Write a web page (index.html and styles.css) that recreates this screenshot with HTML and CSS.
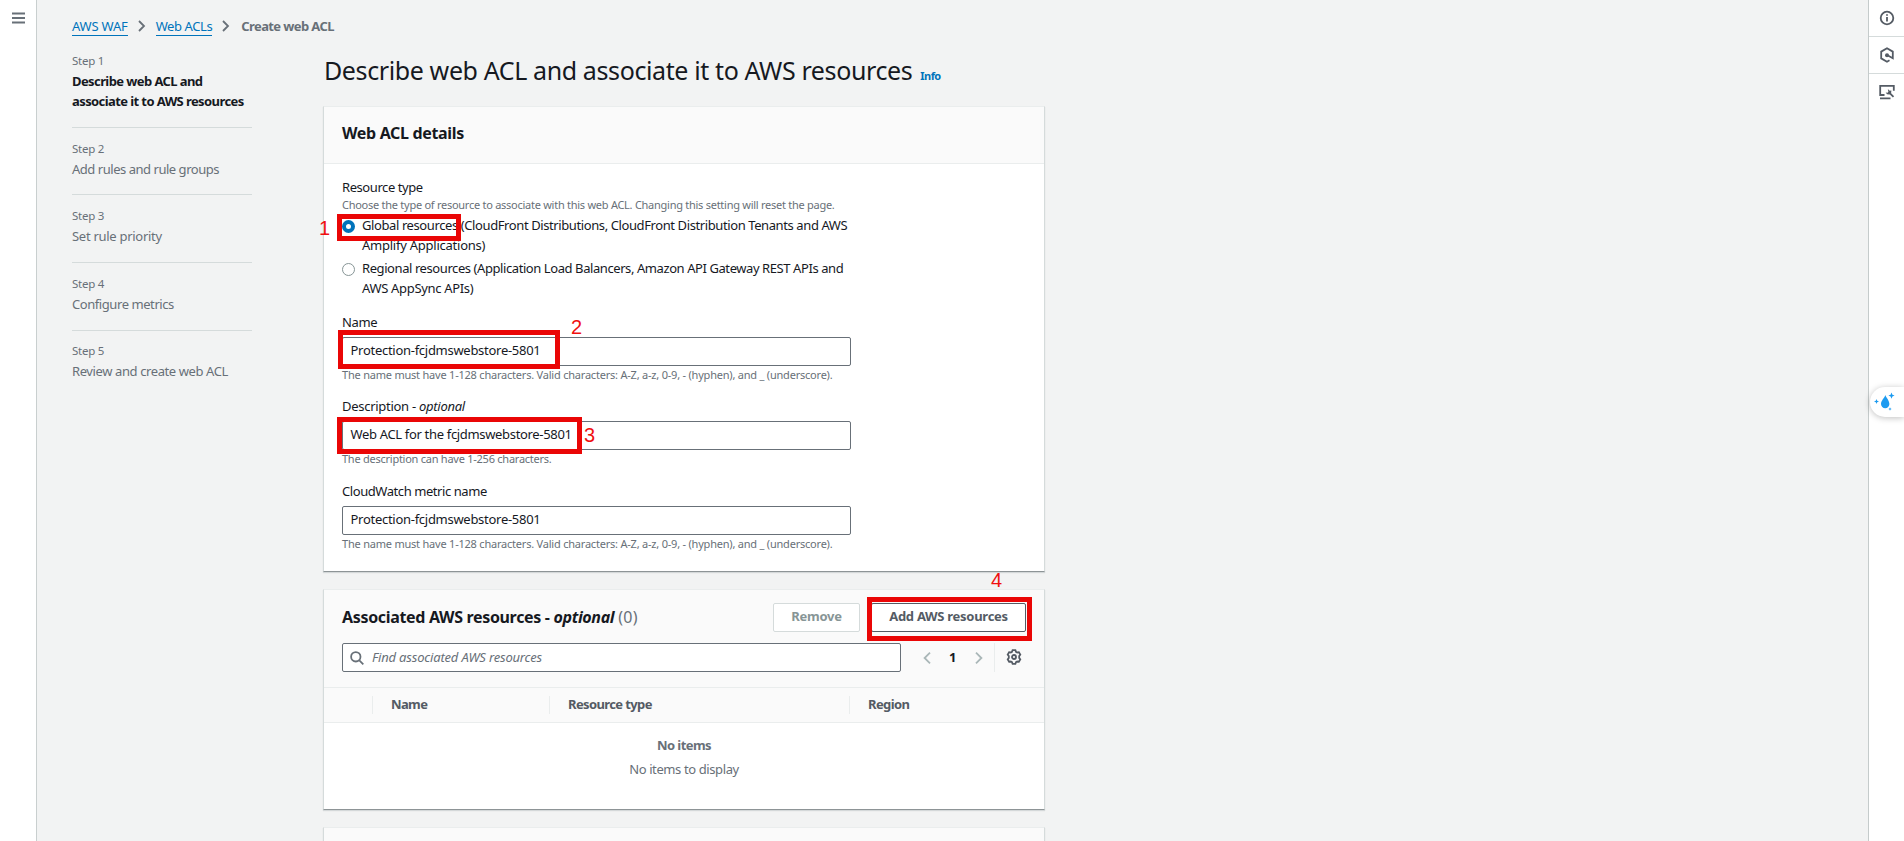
FILE: index.html
```
<!DOCTYPE html>
<html lang="en">
<head>
<meta charset="utf-8">
<title>Create web ACL</title>
<link rel="stylesheet" href="styles.css">
</head>
<body>
<div class="app">
  <aside class="rail rail-left">
    <svg class="menu-icon" width="14" height="14" viewBox="0 0 14 14"><path d="M0 2.500h13M0 7h13M0 11.500h13"/></svg>
  </aside>
  <main class="main">
    <nav class="breadcrumbs">
      <a class="crumb ls-20">AWS WAF</a>
      <svg class="sep" width="8" height="12" viewBox="0 0 8 12"><path d="M1 1l5 5-5 5"/></svg>
      <a class="crumb">Web ACLs</a>
      <svg class="sep" width="8" height="12" viewBox="0 0 8 12"><path d="M1 1l5 5-5 5"/></svg>
      <span class="crumb-current">Create web ACL</span>
    </nav>
    <div class="layout">
      <ol class="steps">
        <li class="step active"><span class="step-no">Step 1</span><span class="step-name">Describe web ACL and<br>associate it to AWS resources</span></li>
        <li class="step"><span class="step-no">Step 2</span><span class="step-name ls-47">Add rules and rule groups</span></li>
        <li class="step"><span class="step-no">Step 3</span><span class="step-name ls-28">Set rule priority</span></li>
        <li class="step"><span class="step-no">Step 4</span><span class="step-name ls-43">Configure metrics</span></li>
        <li class="step"><span class="step-no">Step 5</span><span class="step-name">Review and create web ACL</span></li>
      </ol>
      <div class="content">
        <div class="page-head"><h1>Describe web ACL and associate it to AWS resources</h1><a class="info">Info</a></div>

        <section class="card details">
          <header class="card-head"><h2>Web ACL details</h2></header>
          <div class="card-body">
            <div class="label ls-43">Resource type</div>
            <div class="hint ls-26">Choose the type of resource to associate with this web ACL. Changing this setting will reset the page.</div>
            <div class="option first">
              <span class="radio on"></span>
              <div class="option-text"><span class="ls-40">Global resources (CloudFront Distributions, CloudFront Distribution Tenants and AWS</span><br><span class="ls-24">Amplify Applications)</span></div>
            </div>
            <div class="option">
              <span class="radio"></span>
              <div class="option-text"><span class="ls-42">Regional resources (Application Load Balancers, Amazon API Gateway REST APIs and</span><br><span class="ls-33">AWS AppSync APIs)</span></div>
            </div>
            <div class="fields">
              <div class="field">
                <div class="label">Name</div>
                <div class="input ls-28">Protection-fcjdmswebstore-5801</div>
                <div class="hint">The name must have 1-128 characters. Valid characters: A-Z, a-z, 0-9, - (hyphen), and _ (underscore).</div>
              </div>
              <div class="field">
                <div class="label ls-28">Description - <i>optional</i></div>
                <div class="input ls-33">Web ACL for the fcjdmswebstore-5801</div>
                <div class="hint ls-25">The description can have 1-256 characters.</div>
              </div>
              <div class="field">
                <div class="label ls-43">CloudWatch metric name</div>
                <div class="input ls-28">Protection-fcjdmswebstore-5801</div>
                <div class="hint">The name must have 1-128 characters. Valid characters: A-Z, a-z, 0-9, - (hyphen), and _ (underscore).</div>
              </div>
            </div>
          </div>
        </section>

        <section class="card resources">
          <div class="res-head">
            <div class="res-title"><h2>Associated AWS resources - <i>optional</i></h2><span class="count">(0)</span></div>
            <div class="actions">
              <button class="btn disabled">Remove</button>
              <button class="btn add">Add AWS resources</button>
            </div>
          </div>
          <div class="tools">
            <div class="search">
              <svg width="14" height="14" viewBox="0 0 14 14"><circle cx="5.800" cy="5.800" r="4.700"/><path d="M9.300 9.300l4 4"/></svg>
              <span class="placeholder">Find associated AWS resources</span>
            </div>
            <div class="pager">
              <svg class="chev" width="8" height="12" viewBox="0 0 8 12"><path d="M7 0.700L1.600 6 7 11.300"/></svg>
              <b>1</b>
              <svg class="chev" width="8" height="12" viewBox="0 0 8 12"><path d="M1 0.700L6.400 6 1 11.300"/></svg>
            </div>
            <div class="prefs">
              <svg width="16" height="16" viewBox="0 0 16 16"><path d="M6 2.800L6.600 1.200h2.800l.6 1.600 1.200.7 1.700-.3 1.400 2.400L13.200 7v2l1.100 1.400-1.400 2.400-1.700-.3-1.200.7-.6 1.600H6.600L6 13.200l-1.200-.7-1.700.3-1.400-2.400L2.800 9V7L1.700 5.600l1.400-2.400 1.700.3z"/><circle cx="8" cy="8" r="2"/></svg>
            </div>
          </div>
          <div class="thead">
            <div class="th th-check"></div>
            <div class="th th-name">Name</div>
            <div class="th th-type">Resource type</div>
            <div class="th th-region">Region</div>
          </div>
          <div class="empty"><b>No items</b><span>No items to display</span></div>
        </section>

        <section class="card next"></section>
      </div>
    </div>
  </main>
  <aside class="rail rail-right">
    <div class="tool"><svg width="16" height="16" viewBox="0 0 16 16"><circle cx="8" cy="8" r="6.300"/><path d="M8 7v4.500M8 4.200v1.600"/></svg></div>
    <div class="tool"><svg width="16" height="16" viewBox="0 0 16 16"><path d="M10.500 13.300L8 14.700l-5.800-3.300V4.600L8 1.300l5.800 3.300v6.600L8.500 8.300"/><circle cx="8" cy="8.200" r="2" class="fill"/></svg></div>
    <div class="tool"><svg width="16" height="16" viewBox="0 0 16 16"><path d="M5.500 11H1.200V1.800h13.600v5M1 14.300h10.500M10.500 8.800l4 4"/><path class="fill" d="M8.800 5l1.900 1.700 1.700-.2-.3 2.800-1.700 1.200-2.400-.3-1.300-1.600 1.900.2.800-1z"/></svg></div>
  </aside>
</div>

<div class="assistant">
  <svg width="24" height="20" viewBox="0 0 24 20"><path d="M12.300 3c.8 2.600 4.100 5.400 4.100 9a4.200 4.200 0 0 1-8.400 0c0-3.600 3.500-5.900 4.300-9z"/><path d="M18.500.5l.9 2.200 2.200.9-2.200.9-.9 2.200-.9-2.200-2.200-.9 2.200-.9zM3.500 7l.7 1.800 1.800.7-1.800.7-.7 1.800-.7-1.800L1 9.500l1.800-.7zM17 15.300l.5 1.200 1.200.5-1.200.5-.5 1.200-.5-1.200-1.200-.5 1.200-.5z"/></svg>
</div>

<div class="mark m1"></div><span class="num n1">1</span>
<div class="mark m2"></div><span class="num n2">2</span>
<div class="mark m3"></div><span class="num n3">3</span>
<div class="mark m4"></div><span class="num n4">4</span>
</body>
</html>
```
FILE: styles.css
```
* { box-sizing: border-box; }
body {
  margin: 0;
  height: 841px;
  overflow: hidden;
  background: #f2f3f3;
  color: #16191f;
  font: 13px/20px "Noto Sans", sans-serif;
  letter-spacing: -.395px;
}
h1, h2 { margin: 0; }
b { letter-spacing: -.57px; }
svg { display: block; fill: none; stroke: #545b64; stroke-width: 1.8; flex: none; }
.fill { fill: #545b64; stroke: none; }

.app { display: flex; height: 841px; overflow: hidden; }
.rail { background: #fff; flex: none; }
.rail-left { width: 37px; border-right: 1px solid #c9cfcf; padding: 11px 0 0 12px; }
.rail-right { width: 36px; border-left: 1px solid #c5cbcb; }
.menu-icon { stroke: #687078; }
.tool { height: 37px; border-bottom: 1px solid #d5dbdb; display: flex; align-items: center; padding-left: 10px; }
.tool:last-child { border-bottom: 0; height: 35px; }

.main { flex: 1; padding: 16px 0 0 35px; min-width: 0; }
.breadcrumbs { display: flex; align-items: center; height: 20px; gap: 10px; color: #687078; }
.crumb { color: #0073bb; border-bottom: 1px solid #0073bb; line-height: 18px; }
.crumb-current { font-weight: 700; letter-spacing: -.61px; }
.breadcrumbs .crumb-current { padding-left: 1px; }
.sep { stroke: #687078; }

.layout { display: flex; gap: 71px; }
.steps { list-style: none; margin: 0; padding: 4px 0 0; width: 180px; flex: none; color: #687078; white-space: nowrap; }
.step { padding: 13px 0 15.700px; border-bottom: 1px solid #d5dbdb; }
.step:last-child { border-bottom: 0; padding-top: 12px; }
.step-no { display: block; font-size: 11.500px; line-height: 16px; margin-bottom: 2px; letter-spacing: -.27px; }
.step-name { display: block; }
.active .step-name { font-weight: 700; color: #16191f; letter-spacing: -.59px; }

.content { width: 722px; flex: none; }
.page-head { display: flex; align-items: baseline; gap: 8px; height: 70px; padding: 14px 0 0 1px; }
h1 { font-size: 25px; line-height: 40px; font-weight: 400; white-space: nowrap; letter-spacing: -.385px; }
.info { font-size: 11px; font-weight: 700; color: #0073bb; letter-spacing: -.55px; }

.card {
  background: #fff;
  border: 1px solid #d5dbdb;
  border-top-color: #eaeded;
  border-bottom-color: #8d9496;
  box-shadow: 0 1px 1px rgba(0, 28, 36, .12);
}
.details { height: 466px; margin-bottom: 17px; }
.resources { height: 221px; margin-bottom: 17px; }
.card.next { height: 60px; background: #fafafa; }
.card-head { height: 57px; background: #fafafa; border-bottom: 1px solid #eaeded; padding: 15px 18px; }
h2 { font-size: 16px; line-height: 22px; font-weight: 700; white-space: nowrap; letter-spacing: -.33px; }
.card-body { padding: 13px 18px; }
.label, .hint { white-space: nowrap; }
.hint { font-size: 11px; line-height: 16px; color: #687078; letter-spacing: -.213px; }

.option { display: flex; gap: 7px; margin-top: 3px; white-space: nowrap; }
.option.first { margin-top: 3px; line-height: 19.500px; }
.radio { width: 13px; height: 13px; border: 1px solid #879596; border-radius: 50%; margin-top: 5px; flex: none; background: #fff; }
.radio.on { border: 4px solid #0073bb; margin-top: 4px; }
.fields { display: flex; flex-direction: column; gap: 13.500px; margin-top: 14px; }
.field:nth-child(2) { margin-top: -.5px; }
.field:nth-child(3) { margin-top: .5px; }
.input {
  width: 509px;
  height: 29px;
  margin: 5px 0 1px;
  padding: 2px 7.500px;
  border: 1px solid #687078;
  border-radius: 2px;
  background: #fff;
}

.resources { background: #fafafa; }
.res-head { display: flex; justify-content: space-between; padding: 13px 18px 0; height: 53px; }
.res-title { display: flex; gap: 4px; align-items: baseline; padding-top: 3px; }
.count { font-size: 16px; color: #687078; letter-spacing: .2px; }
.actions { display: flex; gap: 11px; }
.btn {
  height: 29px;
  padding: 0 0 3px;
  width: 155px;
  border: 1px solid #545b64;
  border-radius: 2px;
  background: #fff;
  color: #545b64;
  font: 700 13px/20px "Noto Sans", sans-serif;
  letter-spacing: -.28px;
}
.btn.disabled { width: 87px; color: #879596; border-color: #d5dbdb; }
.tools { display: flex; align-items: center; padding: 0 18px; height: 29px; }
.search {
  width: 559px;
  height: 29px;
  border: 1px solid #687078;
  border-radius: 2px;
  background: #fff;
  display: flex;
  align-items: center;
  padding-left: 7px;
  gap: 8px;
}
.search svg { stroke: #687078; }
.placeholder { font-style: italic; color: #687078; white-space: nowrap; padding-bottom: 1px; letter-spacing: -.18px; }
.pager { display: flex; align-items: center; gap: 18px; padding-left: 22px; width: 93px; }
.pager b { width: 8px; padding: 0 0 2px; }
.chev { stroke: #aab7b8; }
.prefs { border-left: 1px solid #eaeded; height: 29px; padding: 6px 0 0 11px; }
.thead { display: flex; align-items: center; margin-top: 15px; height: 36px; border-top: 1px solid #eaeded; border-bottom: 1px solid #eaeded; color: #545b64; font-weight: 700; letter-spacing: -.62px; }
.th { height: 18px; line-height: 16px; border-left: 1px solid #eaeded; padding-left: 18px; }
.th-check { width: 48px; border: 0; }
.th-name { width: 177px; }
.th-type { width: 300px; }
.empty { height: 86px; background: #fff; display: flex; flex-direction: column; align-items: center; gap: 4px; padding-top: 12px; color: #687078; }

.ls-20 { letter-spacing: -.2px; }
.ls-24 { letter-spacing: -.24px; }
.ls-25 { letter-spacing: -.25px; }
.ls-26 { letter-spacing: -.263px; }
.ls-28 { letter-spacing: -.28px; }
.ls-33 { letter-spacing: -.33px; }
.ls-40 { letter-spacing: -.4px; }
.ls-42 { letter-spacing: -.42px; }
.ls-43 { letter-spacing: -.43px; }
.ls-47 { letter-spacing: -.47px; }

.assistant {
  position: absolute;
  left: 1870px;
  top: 387px;
  width: 34px;
  height: 30px;
  border-radius: 15px 0 0 15px;
  background: #fff;
  box-shadow: 0 1px 6px rgba(0, 0, 0, .25);
  padding: 5px 0 0 3px;
}
.assistant svg { fill: #1d9bf0; stroke: none; }

.mark { position: absolute; border: 5px solid #ea0606; }
.m1 { left: 337px; top: 214px; width: 124px; height: 27px; }
.m2 { left: 338px; top: 330px; width: 222px; height: 39px; }
.m3 { left: 337px; top: 417px; width: 245px; height: 37px; }
.m4 { left: 867px; top: 597px; width: 165px; height: 44px; }
.num { position: absolute; font: 20px/20px "Liberation Sans", sans-serif; color: #f01010; }
.n1 { left: 319px; top: 218px; }
.n2 { left: 571px; top: 317px; }
.n3 { left: 584px; top: 425px; }
.n4 { left: 991px; top: 570px; }
```
